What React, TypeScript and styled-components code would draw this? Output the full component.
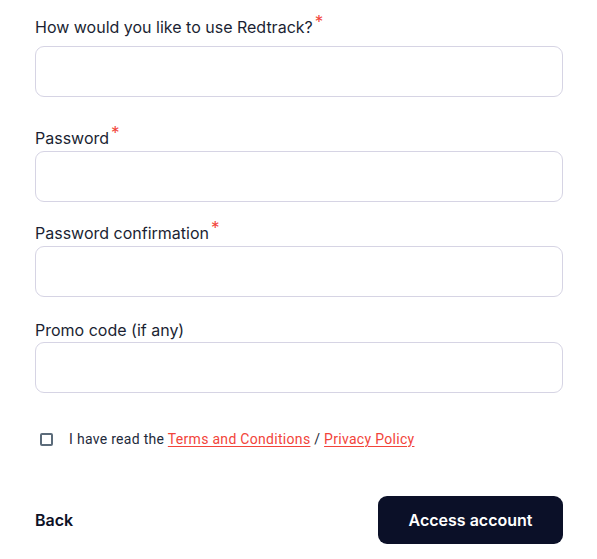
import styled, { createGlobalStyle } from 'styled-components';

const GlobalStyle = createGlobalStyle`
  body {
    margin: 0;
    background: #ffffff;
    font-family: Inter, "Noto Sans", sans-serif;
  }
`;

const Page = styled.form`
  width: 528px;
  padding: 15px 0 0 35px;
  display: flex;
  flex-direction: column;
`;

interface FieldProps {
  gapAfter: number;
}

const Field = styled.div<FieldProps>`
  display: flex;
  flex-direction: column;
  margin-bottom: ${(props) => props.gapAfter}px;
`;

interface LabelProps {
  spaceBelow?: number;
}

const Label = styled.label<LabelProps>`
  font-size: 16px;
  line-height: 24px;
  color: #1b1f33;
  margin-bottom: ${(props) => props.spaceBelow ?? 1}px;
`;

const Required = styled.sup`
  color: #f2443a;
  font-size: 17px;
  line-height: 0;
  margin-left: 2px;
  position: relative;
  top: 1px;
`;

const Input = styled.input`
  box-sizing: border-box;
  width: 528px;
  height: 51px;
  border: 1px solid #d6d4e4;
  border-radius: 9px;
  padding: 0 14px;
  font-family: Inter, sans-serif;
  font-size: 15px;
  outline: none;
  background: #ffffff;
`;

const CheckRow = styled.label`
  display: flex;
  align-items: center;
  gap: 16px;
  padding-left: 5px;
  height: 24px;
  font-family: Roboto, "Liberation Sans", sans-serif;
  font-size: 14px;
  letter-spacing: 0.3px;
  color: #1e2a3b;
`;

const Box = styled.span`
  box-sizing: border-box;
  width: 13px;
  height: 13px;
  border: 2px solid #5b6b7a;
  border-radius: 2px;
`;

const Link = styled.a`
  color: #f2443a;
  text-decoration: underline;
  text-underline-offset: 2px;
`;

const Actions = styled.div`
  display: flex;
  justify-content: space-between;
  align-items: center;
  margin-top: 45px;
`;

const BackButton = styled.button`
  border: none;
  background: none;
  padding: 0;
  font-family: Inter, sans-serif;
  font-weight: 600;
  font-size: 16px;
  color: #0d1126;
  cursor: pointer;
`;

const SubmitButton = styled.button`
  width: 185px;
  height: 48px;
  border: none;
  border-radius: 9px;
  background: #0b1028;
  color: #ffffff;
  font-family: Inter, sans-serif;
  font-weight: 600;
  font-size: 16px;
  cursor: pointer;
`;

const fields = [
  { label: 'How would you like to use Redtrack?', required: true, spaceBelow: 7, gapAfter: 29, type: 'text' },
  { label: 'Password', required: true, spaceBelow: 1, gapAfter: 19, type: 'password' },
  { label: 'Password confirmation', required: true, spaceBelow: 1, gapAfter: 21, type: 'password' },
  { label: 'Promo code (if any)', required: false, spaceBelow: 0, gapAfter: 34, type: 'text' },
];

export default function App() {
  return (
    <>
      <GlobalStyle />
      <Page onSubmit={(e) => e.preventDefault()}>
        {fields.map((f) => (
          <Field key={f.label} gapAfter={f.gapAfter}>
            <Label spaceBelow={f.spaceBelow}>
              {f.label}
              {f.required && <Required>*</Required>}
            </Label>
            <Input type={f.type} />
          </Field>
        ))}
        <CheckRow>
          <Box />
          <span>
            I have read the <Link href="#">Terms and Conditions</Link> / <Link href="#">Privacy Policy</Link>
          </span>
        </CheckRow>
        <Actions>
          <BackButton type="button">Back</BackButton>
          <SubmitButton type="submit">Access account</SubmitButton>
        </Actions>
      </Page>
    </>
  );
}
